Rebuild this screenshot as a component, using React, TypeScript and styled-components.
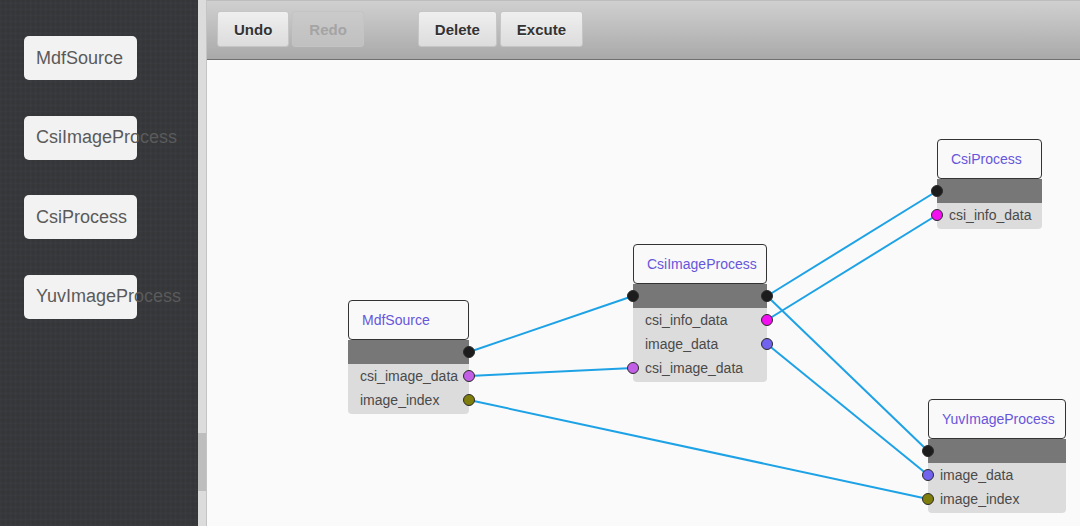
import React from 'react';
import styled, { createGlobalStyle, css } from 'styled-components';

const GlobalStyle = createGlobalStyle`
  html, body, #root {
    height: 100%;
    margin: 0;
  }
  body {
    font-family: 'Liberation Sans', Arial, sans-serif;
    overflow: hidden;
  }
`;

type PortKind = 'flow' | 'csiImage' | 'index' | 'csiInfo' | 'image';

interface Row {
  label: string;
  port: PortKind;
  side: 'in' | 'out';
}

interface NodeDef {
  id: string;
  title: string;
  x: number;
  y: number;
  width: number;
  flowIn?: boolean;
  flowOut?: boolean;
  rows: Row[];
}

const TITLE_H = 40;
const ROW_H = 24;

const portColors: Record<PortKind, string> = {
  flow: '#1c1c1c',
  csiImage: '#c25fe6',
  index: '#7f7d0c',
  csiInfo: '#f20ff0',
  image: '#7163ee',
};

const nodes: NodeDef[] = [
  {
    id: 'mdf',
    title: 'MdfSource',
    x: 141,
    y: 240,
    width: 121,
    flowOut: true,
    rows: [
      { label: 'csi_image_data', port: 'csiImage', side: 'out' },
      { label: 'image_index', port: 'index', side: 'out' },
    ],
  },
  {
    id: 'csiImage',
    title: 'CsiImageProcess',
    x: 426,
    y: 184,
    width: 134,
    flowIn: true,
    flowOut: true,
    rows: [
      { label: 'csi_info_data', port: 'csiInfo', side: 'out' },
      { label: 'image_data', port: 'image', side: 'out' },
      { label: 'csi_image_data', port: 'csiImage', side: 'in' },
    ],
  },
  {
    id: 'csi',
    title: 'CsiProcess',
    x: 730,
    y: 79,
    width: 105,
    flowIn: true,
    rows: [{ label: 'csi_info_data', port: 'csiInfo', side: 'in' }],
  },
  {
    id: 'yuv',
    title: 'YuvImageProcess',
    x: 721,
    y: 339,
    width: 138,
    flowIn: true,
    rows: [
      { label: 'image_data', port: 'image', side: 'in' },
      { label: 'image_index', port: 'index', side: 'in' },
    ],
  },
];

// port reference: node id, row index (-1 = header flow port), side
type PortRef = [string, number, 'in' | 'out'];

const edges: [PortRef, PortRef][] = [
  [['mdf', -1, 'out'], ['csiImage', -1, 'in']],
  [['mdf', 0, 'out'], ['csiImage', 2, 'in']],
  [['mdf', 1, 'out'], ['yuv', 1, 'in']],
  [['csiImage', -1, 'out'], ['csi', -1, 'in']],
  [['csiImage', -1, 'out'], ['yuv', -1, 'in']],
  [['csiImage', 0, 'out'], ['csi', 0, 'in']],
  [['csiImage', 1, 'out'], ['yuv', 0, 'in']],
];

const portPoint = ([id, row, side]: PortRef) => {
  const n = nodes.find((node) => node.id === id)!;
  const px = side === 'out' ? n.x + n.width : n.x;
  const py = n.y + TITLE_H + ROW_H / 2 + (row + 1) * ROW_H;
  return { px, py };
};

const sideItems = ['MdfSource', 'CsiImageProcess', 'CsiProcess', 'YuvImageProcess'];

export default function App() {
  return (
    <>
      <GlobalStyle />
      <Layout>
        <Sidebar>
          {sideItems.map((item) => (
            <PaletteItem key={item}>{item}</PaletteItem>
          ))}
        </Sidebar>
        <ScrollTrack>
          <ScrollThumb />
        </ScrollTrack>
        <Main>
          <Toolbar>
            <ToolButton>Undo</ToolButton>
            <ToolButton disabled>Redo</ToolButton>
            <ToolButton $gapLeft>Delete</ToolButton>
            <ToolButton>Excute</ToolButton>
          </Toolbar>
          <Canvas>
            <Wires>
              {edges.map(([a, b], i) => {
                const p1 = portPoint(a);
                const p2 = portPoint(b);
                return (
                  <line
                    key={i}
                    x1={p1.px}
                    y1={p1.py}
                    x2={p2.px}
                    y2={p2.py}
                    stroke="#1ea2e6"
                    strokeWidth={2}
                  />
                );
              })}
            </Wires>
            {nodes.map((n) => (
              <Node key={n.id} style={{ left: n.x, top: n.y, width: n.width }}>
                <NodeTitle>{n.title}</NodeTitle>
                <FlowBar>
                  {n.flowIn && <Port $color={portColors.flow} $side="in" />}
                  {n.flowOut && <Port $color={portColors.flow} $side="out" />}
                </FlowBar>
                <NodeBody>
                  {n.rows.map((r) => (
                    <NodeRow key={r.label}>
                      {r.label}
                      <Port $color={portColors[r.port]} $side={r.side} />
                    </NodeRow>
                  ))}
                </NodeBody>
              </Node>
            ))}
          </Canvas>
        </Main>
      </Layout>
    </>
  );
}

const Layout = styled.div`
  display: flex;
  height: 100%;
  width: 100%;
`;

const Sidebar = styled.div`
  width: 198px;
  flex-shrink: 0;
  box-sizing: border-box;
  padding: 36px 0 0 24px;
  display: flex;
  flex-direction: column;
  gap: 35.5px;
  background-color: #36383b;
  background-image: repeating-linear-gradient(
      90deg,
      rgba(255, 255, 255, 0.015) 0px,
      rgba(0, 0, 0, 0.03) 3px,
      transparent 5px
    ),
    repeating-linear-gradient(
      0deg,
      rgba(255, 255, 255, 0.012) 0px,
      rgba(0, 0, 0, 0.03) 3px,
      transparent 6px
    );
`;

const PaletteItem = styled.div`
  width: 113px;
  height: 44px;
  box-sizing: border-box;
  padding-left: 12px;
  display: flex;
  align-items: center;
  background: #f2f2f2;
  border-radius: 5px;
  color: #5a5a5a;
  font-size: 18px;
  white-space: nowrap;
  overflow: visible;
`;

const ScrollTrack = styled.div`
  width: 8px;
  flex-shrink: 0;
  background: #dcdcdc;
  border-right: 1px solid #c4c4c4;
  position: relative;
`;

const ScrollThumb = styled.div`
  position: absolute;
  left: 0;
  right: 0;
  top: 433px;
  height: 58px;
  background: #bdbdbd;
`;

const Main = styled.div`
  flex: 1;
  display: flex;
  flex-direction: column;
  min-width: 0;
`;

const Toolbar = styled.div`
  height: 60px;
  flex-shrink: 0;
  box-sizing: border-box;
  padding: 10px 0 0 10px;
  display: flex;
  align-items: flex-start;
  gap: 3px;
  border-top: 1px solid #bdbdbd;
  border-bottom: 1px solid #6f6f6f;
  background: linear-gradient(#d0d0d0, #a9a9a9);
`;

const ToolButton = styled.button<{ $gapLeft?: boolean }>`
  height: 36px;
  padding: 0 16px;
  border: 1px solid #c6c6c6;
  border-radius: 3px;
  background: linear-gradient(#efefef, #dcdcdc);
  color: #333;
  font-family: 'Liberation Sans', Arial, sans-serif;
  font-weight: bold;
  font-size: 15px;
  text-shadow: 0 1px 0 rgba(255, 255, 255, 0.6);
  ${({ $gapLeft }) =>
    $gapLeft &&
    css`
      margin-left: 51px;
    `}

  &:disabled {
    background: linear-gradient(#cacaca, #c0c0c0);
    border-color: #c4c4c4;
    color: #a4a4a4;
    text-shadow: none;
  }
`;

const Canvas = styled.div`
  flex: 1;
  position: relative;
  background: #fafafa;
  overflow: hidden;
`;

const Wires = styled.svg`
  position: absolute;
  inset: 0;
  width: 100%;
  height: 100%;
`;

const Node = styled.div`
  position: absolute;
  display: flex;
  flex-direction: column;
  font-size: 14px;
`;

const NodeTitle = styled.div`
  height: ${TITLE_H}px;
  box-sizing: border-box;
  padding-left: 13px;
  display: flex;
  align-items: center;
  border: 1px solid #333;
  border-radius: 4px;
  background: #f9f9f9;
  color: #6656dc;
  white-space: nowrap;
`;

const FlowBar = styled.div`
  height: ${ROW_H}px;
  position: relative;
  background: #777;
`;

const NodeBody = styled.div`
  background: #dcdcdc;
  border-radius: 0 0 4px 4px;
  padding-bottom: 2px;
`;

const NodeRow = styled.div`
  height: ${ROW_H}px;
  position: relative;
  padding-left: 12px;
  display: flex;
  align-items: center;
  color: #4a4a4a;
  white-space: nowrap;
`;

const Port = styled.span<{ $color: string; $side: 'in' | 'out' }>`
  position: absolute;
  top: 50%;
  width: 12px;
  height: 12px;
  box-sizing: border-box;
  margin-top: -6px;
  border-radius: 50%;
  border: 1px solid #2a2a2a;
  background: ${({ $color }) => $color};
  ${({ $side }) => ($side === 'out' ? 'right: -6px;' : 'left: -6px;')}
`;
